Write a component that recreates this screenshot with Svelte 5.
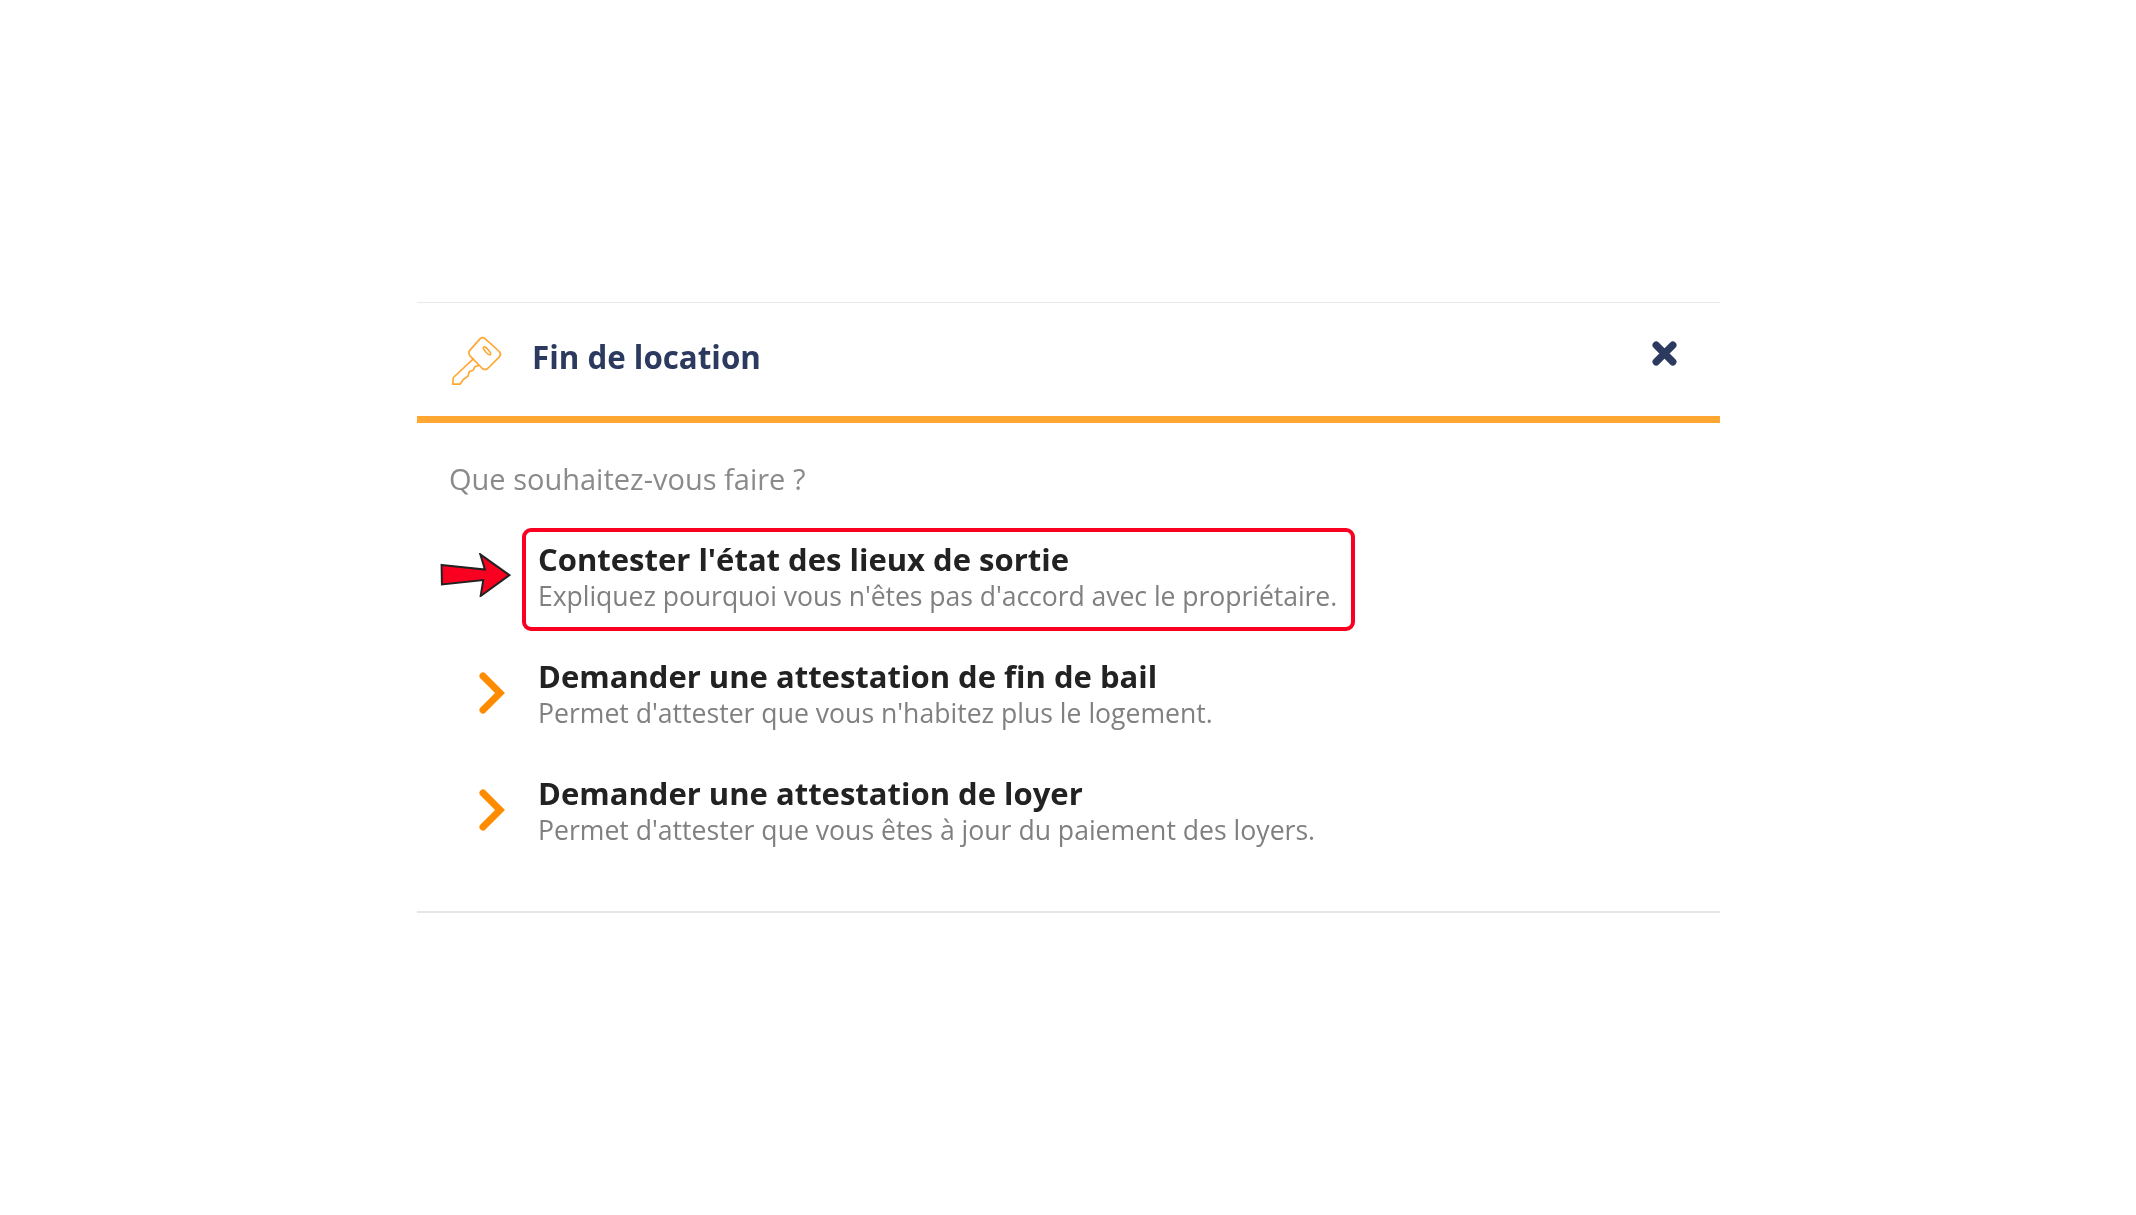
<script>
  const options = [
    { title: "Contester l'état des lieux de sortie", sub: "Expliquez pourquoi vous n'êtes pas d'accord avec le propriétaire.", active: true },
    { title: "Demander une attestation de fin de bail", sub: "Permet d'attester que vous n'habitez plus le logement.", active: false },
    { title: "Demander une attestation de loyer", sub: "Permet d'attester que vous êtes à jour du paiement des loyers.", active: false }
  ];
</script>

<div class="page">
  <section class="panel">
    <header class="head">
      <svg class="key" viewBox="120 135 165 155" fill="none" stroke="#ffa633" stroke-width="5" stroke-linejoin="round" stroke-linecap="round" aria-hidden="true">
        <path d="M210 146 Q218 139 226 146 L268 184 Q275 192 268 200 L233 235 Q225 241 217 235 L180 197 Q173 188 180 180 Z" />
        <path d="M190 206 L130 262 L128 282 L150 282 L160 268 L174 258 L178 244 L190 240 L194 230 L206 226" />
        <ellipse cx="231" cy="182" rx="15" ry="5" transform="rotate(48 231 182)" />
      </svg>
      <h2>Fin de location</h2>
      <svg class="close" viewBox="0 0 24 24" aria-hidden="true">
        <path d="M4 4 L20 20 M20 4 L4 20" stroke="#2b3a5e" stroke-width="7" stroke-linecap="round" />
      </svg>
    </header>

    <p class="question">Que souhaitez-vous faire ?</p>

    <ul class="options">
      {#each options as o}
        <li class="option">
          <span class="marker">
            {#if o.active}
              <svg class="arrow" viewBox="60 125 213 133" aria-hidden="true">
                <path d="M64 161 L195 175 L181 129 L269 192 L182 255 L190 207 L65 220 Z" fill="#fa0020" stroke="#222" stroke-width="6" stroke-linejoin="miter" />
              </svg>
            {:else}
              <svg class="chevron" viewBox="0 0 28 44" aria-hidden="true">
                <path d="M4 5 L21 22 L4 39" fill="none" stroke="#ff8c00" stroke-width="7" stroke-linecap="round" stroke-linejoin="miter" />
              </svg>
            {/if}
          </span>
          <div class="text" class:active={o.active}>
            <div class="title">{o.title}</div>
            <div class="sub">{o.sub}</div>
          </div>
        </li>
      {/each}
    </ul>
  </section>
</div>

<style>
  :global(body) {
    margin: 0;
    background: #fff;
    font-family: "Open Sans", "Liberation Sans", sans-serif;
  }
  .page {
    height: 1215px;
    padding: 302px 416px 0 417px;
    box-sizing: border-box;
  }
  .panel {
    height: 611px;
    box-sizing: border-box;
    border-top: 1px solid #e9e9e9;
    border-bottom: 2px solid #e6e6e6;
    filter: blur(0.5px);
  }
  .head {
    height: 113px;
    box-sizing: content-box;
    display: flex;
    align-items: center;
    padding: 0 43px 0 33px;
    border-bottom: 7px solid #ffa633;
  }
  .key {
    width: 55px;
    height: 52px;
    margin-right: 27px;
    margin-top: 2px;
  }
  h2 {
    margin: 0 0 6px;
    flex: 1;
    font-size: 31.3px;
    font-weight: 700;
    color: #2b3a5e;
    line-height: 44px;
  }
  .close {
    width: 25px;
    height: 25px;
    margin-bottom: 12px;
  }
  .question {
    margin: 37px 0 0 32px;
    font-size: 29px;
    line-height: 38px;
    color: #8a8a8a;
  }
  .options {
    list-style: none;
    margin: 30px 0 0;
    padding: 0;
    display: flex;
    flex-direction: column;
    gap: 14px;
  }
  .option {
    display: flex;
    align-items: center;
    height: 103px;
  }
  .marker {
    width: 105px;
    display: flex;
    justify-content: flex-end;
    position: relative;
  }
  .chevron {
    width: 28px;
    height: 44px;
    margin-right: 15px;
    margin-top: -7px;
  }
  .arrow {
    width: 71px;
    height: 44px;
    margin-right: 11px;
    margin-top: -9px;
  }
  .text {
    box-sizing: border-box;
    height: 103px;
    padding: 7px 12px;
    border: 4px solid transparent;
    border-radius: 9px;
    width: 833px;
  }
  .text.active {
    border-color: #fa0020;
  }
  .title {
    font-size: 31px;
    font-weight: 700;
    color: #222;
    line-height: 40px;
  }
  .sub {
    font-size: 26.6px;
    color: #808080;
    line-height: 34px;
    white-space: nowrap;
  }
  .active .sub {
    letter-spacing: -0.06px;
  }
</style>
